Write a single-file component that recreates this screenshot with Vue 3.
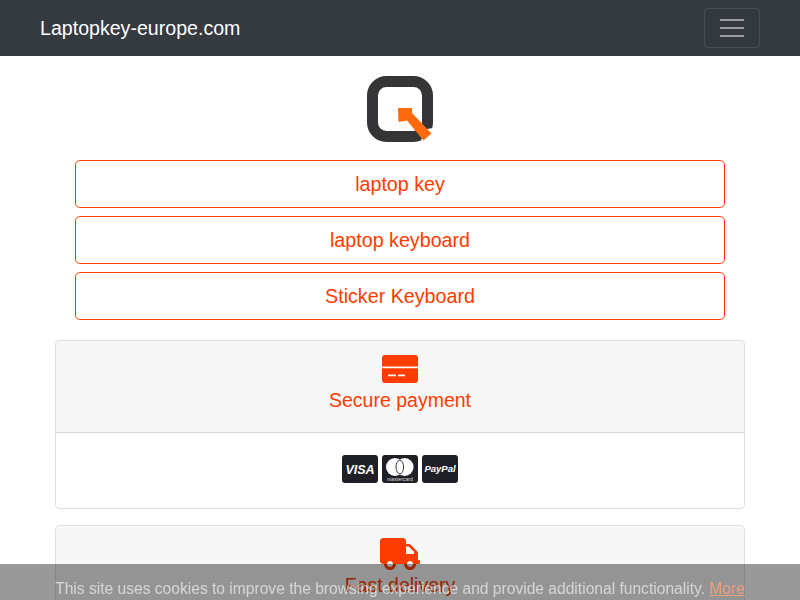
<template>
  <div class="page">
    <nav class="navbar">
      <a class="brand" href="#">Laptopkey-europe.com</a>
      <button class="toggler" type="button">
        <span class="bar"></span>
        <span class="bar"></span>
        <span class="bar"></span>
      </button>
    </nav>

    <main class="content">
      <svg class="logo" viewBox="0 0 66 66" xmlns="http://www.w3.org/2000/svg">
        <rect x="5.500" y="5.500" width="55" height="55" rx="14" fill="none" stroke="#353537" stroke-width="11" />
        <path d="M60 53 L66 52 V66 H56 L54 64 Z" fill="#fff" />
        <path d="M31 32 H45 V37 L64.500 57.500 L56.500 64.500 L40 44.500 L31.500 46 Z" fill="#ff6a0d" />
      </svg>

      <div class="links">
        <a v-for="l in links" :key="l" class="link-btn" href="#">{{ l }}</a>
      </div>

      <section class="card">
        <header class="card-head">
          <svg class="head-icon card-glyph" viewBox="0 0 36 28" xmlns="http://www.w3.org/2000/svg">
            <path :d="cardIcon" fill-rule="evenodd" />
          </svg>
          <div class="head-title">Secure payment</div>
        </header>
        <div class="card-body">
          <svg class="pay" viewBox="0 0 36 28" xmlns="http://www.w3.org/2000/svg">
            <rect width="36" height="28" rx="3" fill="#1f2026" />
            <text x="18" y="18.500" text-anchor="middle" class="visa">VISA</text>
          </svg>
          <svg class="pay" viewBox="0 0 36 28" xmlns="http://www.w3.org/2000/svg">
            <rect width="36" height="28" rx="3" fill="#1f2026" />
            <circle cx="13" cy="12" r="9" fill="#fff" />
            <circle cx="22.600" cy="12" r="9" fill="#fff" />
            <ellipse cx="17.800" cy="12" rx="3.800" ry="6.800" fill="#fff" stroke="#3a3a40" stroke-width="1" />
            <text x="18" y="26" text-anchor="middle" class="mc">mastercard</text>
          </svg>
          <svg class="pay" viewBox="0 0 36 28" xmlns="http://www.w3.org/2000/svg">
            <rect width="36" height="28" rx="3" fill="#1f2026" />
            <text x="18" y="17" text-anchor="middle" class="paypal">PayPal</text>
          </svg>
        </div>
      </section>

      <section class="card second">
        <header class="card-head">
          <svg class="head-icon" viewBox="0 0 640 512" xmlns="http://www.w3.org/2000/svg">
            <path :d="truckIcon" />
          </svg>
          <div class="head-title">Fast delivery</div>
        </header>
      </section>
    </main>

    <div class="cookie">
      This site uses cookies to improve the browsing experience and provide additional functionality.
      <a href="#">More</a>
    </div>
  </div>
</template>

<script setup>
const links = ['laptop key', 'laptop keyboard', 'Sticker Keyboard']

const cardIcon = 'M0 11.500V3a3 3 0 0 1 3-3H33a3 3 0 0 1 3 3V11.500ZM0 13.200H36V25a3 3 0 0 1-3 3H3a3 3 0 0 1-3-3ZM6 19.500V21.300H14V19.500ZM16 19.500V21.300H23V19.500Z'
const truckIcon = 'M624 352h-16V243.900c0-12.700-5.100-24.900-14.100-33.900L494 110.100c-9-9-21.200-14.100-33.900-14.100H416V48c0-26.500-21.500-48-48-48H48C21.500 0 0 21.500 0 48v320c0 26.500 21.500 48 48 48h16c0 53 43 96 96 96s96-43 96-96h128c0 53 43 96 96 96s96-43 96-96h48c8.800 0 16-7.200 16-16v-32c0-8.800-7.200-16-16-16zM160 464c-26.500 0-48-21.500-48-48s21.500-48 48-48 48 21.500 48 48-21.500 48-48 48zm320 0c-26.500 0-48-21.500-48-48s21.500-48 48-48 48 21.500 48 48-21.500 48-48 48zm64-208H416V136h44.100l83.900 83.900V256z'
</script>

<style>
html, body { overflow: hidden; background: #fff; }
</style>

<style scoped>
.page {
  height: 600px;
  overflow: hidden;
  font-family: "Liberation Sans", Arial, sans-serif;
  font-size: 16px;
  line-height: 1.5;
  color: #212529;
}
.navbar {
  height: 56px;
  box-sizing: border-box;
  padding: 0 40px;
  background: #343a40;
  display: flex;
  align-items: center;
  justify-content: space-between;
}
.brand { color: #fff; font-size: 19.600px; padding-top: 2px; text-decoration: none; }
.toggler {
  width: 56px;
  height: 40px;
  box-sizing: border-box;
  padding: 0;
  background: transparent;
  border: 1px solid rgba(255, 255, 255, 0.1);
  border-radius: 4px;
  display: flex;
  flex-direction: column;
  align-items: center;
  justify-content: center;
  gap: 6px;
}
.bar { width: 24px; height: 2px; background: rgba(255, 255, 255, 0.5); }
.content {
  padding: 0 55px;
  display: flex;
  flex-direction: column;
  align-items: stretch;
}
.logo { width: 66px; height: 66px; margin: 20px auto 18px; display: block; }
.links { display: flex; flex-direction: column; gap: 8px; padding: 0 20px; }
.link-btn {
  height: 48px;
  box-sizing: border-box;
  border: 1px solid #ff3c00;
  border-radius: 4.800px;
  color: #ff3c00;
  font-size: 19.700px;
  line-height: 46px;
  text-align: center;
  text-decoration: none;
}
.card {
  margin-top: 20px;
  border: 1px solid rgba(0, 0, 0, 0.125);
  border-radius: 4px;
  overflow: hidden;
}
.card.second { margin-top: 16px; }
.card-head {
  padding: 12px 20px 17px;
  background: rgba(0, 0, 0, 0.03);
  border-bottom: 1px solid rgba(0, 0, 0, 0.125);
  text-align: center;
}
.head-icon { display: block; height: 32px; margin: 0 auto; fill: #ff3c00; }
.card-glyph { height: 28px; padding: 2px 0; }
.head-title { color: #ff3c00; font-size: 19.500px; line-height: 30px; }
.card-body {
  height: 75px;
  box-sizing: border-box;
  padding: 22px 0 0;
  display: flex;
  justify-content: center;
  gap: 4px;
}
.pay { width: 36px; height: 28px; display: block; }
.visa { font: italic bold 12.500px "Liberation Sans", Arial, sans-serif; fill: #fff; }
.paypal { font: italic bold 9.500px "Liberation Sans", Arial, sans-serif; fill: #fff; }
.mc { font: 5.200px "Liberation Sans", Arial, sans-serif; fill: #ddd; }
.cookie {
  position: fixed;
  left: 0;
  right: 0;
  bottom: 0;
  height: 36px;
  box-sizing: border-box;
  padding-top: 13px;
  overflow: hidden;
  background: rgba(0, 0, 0, 0.4);
  color: rgba(255, 255, 255, 0.6);
  font-size: 15.600px;
  line-height: 24px;
  text-align: center;
  white-space: nowrap;
}
.cookie a { color: rgba(255, 160, 120, 0.85); text-decoration: underline; }
</style>
